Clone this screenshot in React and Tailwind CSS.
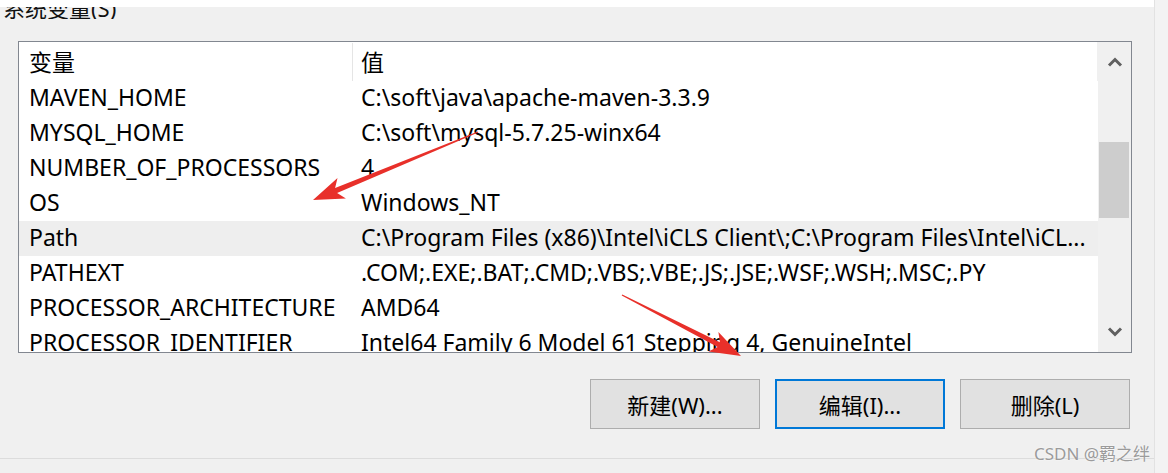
import React from 'react';

const rows = [
  ['MAVEN_HOME', 'C:\\soft\\java\\apache-maven-3.3.9'],
  ['MYSQL_HOME', 'C:\\soft\\mysql-5.7.25-winx64'],
  ['NUMBER_OF_PROCESSORS', '4'],
  ['OS', 'Windows_NT'],
  ['Path', 'C:\\Program Files (x86)\\Intel\\iCLS Client\\;C:\\Program Files\\Intel\\iCL...'],
  ['PATHEXT', '.COM;.EXE;.BAT;.CMD;.VBS;.VBE;.JS;.JSE;.WSF;.WSH;.MSC;.PY'],
  ['PROCESSOR_ARCHITECTURE', 'AMD64'],
  ['PROCESSOR_IDENTIFIER', 'Intel64 Family 6 Model 61 Stepping 4, GenuineIntel'],
];

// hand-drawn style red arrow, tail -> tip
function arrowPoints(tail, tip) {
  const dx = tip[0] - tail[0];
  const dy = tip[1] - tail[1];
  const len = Math.hypot(dx, dy);
  const ux = dx / len;
  const uy = dy / len;
  const nx = -uy;
  const ny = ux;
  const headLen = 31;
  const headW = 11;
  const bx = tip[0] - ux * headLen;
  const by = tip[1] - uy * headLen;
  const nbx = tip[0] - ux * (headLen - 6);
  const nby = tip[1] - uy * (headLen - 6);
  const pts = [
    [tail[0] + nx * 0.6, tail[1] + ny * 0.6],
    [nbx + nx * 2.6, nby + ny * 2.6],
    [bx + nx * headW, by + ny * headW],
    tip,
    [bx - nx * headW, by - ny * headW],
    [nbx - nx * 2.6, nby - ny * 2.6],
    [tail[0] - nx * 0.6, tail[1] - ny * 0.6],
  ];
  return pts.map((p) => p[0].toFixed(1) + ',' + p[1].toFixed(1)).join(' ');
}

function Chevron({ up }) {
  return (
    <svg width="16" height="10" viewBox="0 0 16 10">
      <path
        d={up ? 'M2 8.5 L8 2.5 L14 8.5' : 'M2 1.5 L8 7.5 L14 1.5'}
        fill="none"
        stroke="#606060"
        strokeWidth="3"
      />
    </svg>
  );
}

function App() {
  return (
    <div className="relative flex h-[473px] w-[1168px] overflow-hidden bg-[#f0f0f0] font-['Noto_Sans','Noto_Sans_CJK_SC',sans-serif] text-black">
      <div className="flex w-[1155px] flex-col border-r border-[#e2e2e2]">
        <div className="h-[7px] bg-white" />
        <div className="h-[12px] overflow-hidden pl-[3px]">
          <div className="-mt-[12px] text-[22px] leading-[26px] text-[#111]">系统变量(S)</div>
        </div>

        <div className="ml-[18px] mt-[22px] flex h-[312px] w-[1114px] border border-[#828790] bg-white">
          <div className="flex flex-1 flex-col overflow-hidden">
            <div className="flex h-[39px] shrink-0 items-center border-r border-[#f0f0f0] pt-[1px] text-[23px]">
              <div className="flex h-full w-[334px] items-center border-r border-[#e5e5e5] pl-[10px]">变量</div>
              <div className="pl-[8px]">值</div>
            </div>
            {rows.map(([name, value]) => (
              <div
                key={name}
                className={
                  'flex h-[35px] shrink-0 items-start text-[23px] leading-[33px] whitespace-nowrap ' +
                  (name === 'Path' ? 'bg-[#eeeeee]' : '')
                }
              >
                <div className="w-[334px] shrink-0 pl-[10px]">{name}</div>
                <div className="pl-[8px]">{value}</div>
              </div>
            ))}
          </div>

          <div className="flex w-[33px] flex-col bg-[#f0f0f0]">
            <div className="flex h-[40px] items-center justify-center">
              <Chevron up />
            </div>
            <div className="flex-1 pt-[60px]">
              <div className="ml-[1px] h-[76px] w-[30px] bg-[#cdcdcd]" />
            </div>
            <div className="flex h-[40px] items-center justify-center">
              <Chevron />
            </div>
          </div>
        </div>

        <div className="mt-[26px] flex justify-end gap-[15px] pr-[24px] text-[22px]">
          <button className="flex h-[50px] w-[170px] items-center justify-center border border-[#adadad] bg-[#e1e1e1] pt-[2px]">
            新建(W)...
          </button>
          <button className="flex h-[50px] w-[170px] items-center justify-center border-2 border-[#0078d7] bg-[#e1e1e1] pt-[2px]">
            编辑(I)...
          </button>
          <button className="flex h-[50px] w-[170px] items-center justify-center border border-[#adadad] bg-[#e1e1e1] pt-[2px]">
            删除(L)
          </button>
        </div>

        <div className="h-[30px] border-b border-[#dcdcdc]" />
      </div>
      <div className="flex-1 bg-[#f3f3f3]" />

      <svg className="pointer-events-none absolute left-0 top-0" width="1168" height="473">
        <polygon points={arrowPoints([478, 132], [313, 200])} fill="#e8302a" />
        <polygon points={arrowPoints([622, 295], [741, 356])} fill="#e8302a" />
      </svg>

      <div className="absolute left-[1034px] top-[442px] text-[17px] leading-[24px] text-[#9b9b9b] [text-shadow:0_0_2px_#fff]">
        CSDN @羁之绊
      </div>
    </div>
  );
}

export default App;
